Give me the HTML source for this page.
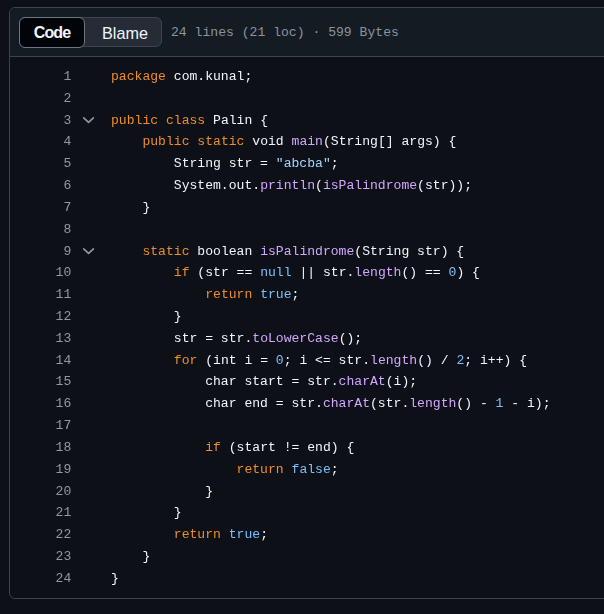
<!DOCTYPE html>
<html><head><meta charset="utf-8">
<style>
html,body{margin:0;padding:0;background:#0d1117;width:604px;height:614px;overflow:hidden;}
body{position:relative;font-family:"Liberation Sans",sans-serif;}
.box{position:absolute;left:9px;top:7px;width:640px;height:590px;border:1px solid #3d444d;border-radius:6px;background:#0d1117;}
.hdr{position:absolute;left:10px;top:8px;width:640px;height:48px;background:#151b23;border-bottom:1px solid #3d444d;border-radius:6px 0 0 0;}
.seg{position:absolute;left:19px;top:17px;width:141px;height:28px;border:1px solid #3d444d;border-radius:6px;background:#262c36;}
.btn-code{position:absolute;left:19px;top:17px;width:64px;height:29px;border:1px solid #6e7681;border-radius:6px;background:#010409;color:#f0f6fc;font-weight:bold;font-size:16px;letter-spacing:-0.9px;line-height:29px;text-align:center;}
.btn-blame{position:absolute;left:86.5px;top:17px;width:77px;height:32px;color:#f0f6fc;font-size:16.2px;line-height:32.5px;text-align:center;}
.meta{position:absolute;left:171px;top:23px;font-family:"Liberation Mono",monospace;font-size:13.1px;line-height:20px;color:#8b949e;white-space:pre;}
.ln,.cl{position:absolute;will-change:transform;height:21.818px;line-height:21.818px;font-family:"Liberation Mono",monospace;font-size:13.09px;white-space:pre;}
.ln{left:20px;width:51.3px;text-align:right;color:#9198a1;}
.cl{left:111px;color:#f0f6fc;}
.chev{position:absolute;left:82px;}
.k{color:#ec8e2c}.f{color:#d2a8ff}.s{color:#a5d6ff}.c{color:#79c0ff}
</style></head><body>
<div class="box"></div>
<div class="hdr"></div>
<div class="seg"></div>
<div class="btn-code">Code</div>
<div class="btn-blame">Blame</div>
<div class="meta">24 lines (21 loc) · 599 Bytes</div>
<div class="ln" style="top:66.000px">1</div><div class="cl" style="top:66.000px"><span class="k">package</span> com.kunal;</div>
<div class="ln" style="top:87.818px">2</div><div class="cl" style="top:87.818px"></div>
<div class="ln" style="top:109.636px">3</div><svg class="chev" style="top:114.64px" width="14" height="14" viewBox="0 0 14 14"><path d="M1.7 2.9 L6.55 7.4 L11.4 2.9" fill="none" stroke="#9198a1" stroke-width="1.6" stroke-linecap="round" stroke-linejoin="round"/></svg><div class="cl" style="top:109.636px"><span class="k">public</span> <span class="k">class</span> Palin {</div>
<div class="ln" style="top:131.454px">4</div><div class="cl" style="top:131.454px">    <span class="k">public</span> <span class="k">static</span> void <span class="f">main</span>(String[] args) {</div>
<div class="ln" style="top:153.272px">5</div><div class="cl" style="top:153.272px">        String str = <span class="s">"abcba"</span>;</div>
<div class="ln" style="top:175.090px">6</div><div class="cl" style="top:175.090px">        System.out.<span class="f">println</span>(<span class="f">isPalindrome</span>(str));</div>
<div class="ln" style="top:196.908px">7</div><div class="cl" style="top:196.908px">    }</div>
<div class="ln" style="top:218.726px">8</div><div class="cl" style="top:218.726px"></div>
<div class="ln" style="top:240.544px">9</div><svg class="chev" style="top:245.54px" width="14" height="14" viewBox="0 0 14 14"><path d="M1.7 2.9 L6.55 7.4 L11.4 2.9" fill="none" stroke="#9198a1" stroke-width="1.6" stroke-linecap="round" stroke-linejoin="round"/></svg><div class="cl" style="top:240.544px">    <span class="k">static</span> boolean <span class="f">isPalindrome</span>(String str) {</div>
<div class="ln" style="top:262.362px">10</div><div class="cl" style="top:262.362px">        <span class="k">if</span> (str == <span class="c">null</span> || str.<span class="f">length</span>() == <span class="c">0</span>) {</div>
<div class="ln" style="top:284.180px">11</div><div class="cl" style="top:284.180px">            <span class="k">return</span> <span class="c">true</span>;</div>
<div class="ln" style="top:305.998px">12</div><div class="cl" style="top:305.998px">        }</div>
<div class="ln" style="top:327.816px">13</div><div class="cl" style="top:327.816px">        str = str.<span class="f">toLowerCase</span>();</div>
<div class="ln" style="top:349.634px">14</div><div class="cl" style="top:349.634px">        <span class="k">for</span> (int i = <span class="c">0</span>; i &lt;= str.<span class="f">length</span>() / <span class="c">2</span>; i++) {</div>
<div class="ln" style="top:371.452px">15</div><div class="cl" style="top:371.452px">            char start = str.<span class="f">charAt</span>(i);</div>
<div class="ln" style="top:393.270px">16</div><div class="cl" style="top:393.270px">            char end = str.<span class="f">charAt</span>(str.<span class="f">length</span>() - <span class="c">1</span> - i);</div>
<div class="ln" style="top:415.088px">17</div><div class="cl" style="top:415.088px"></div>
<div class="ln" style="top:436.906px">18</div><div class="cl" style="top:436.906px">            <span class="k">if</span> (start != end) {</div>
<div class="ln" style="top:458.724px">19</div><div class="cl" style="top:458.724px">                <span class="k">return</span> <span class="c">false</span>;</div>
<div class="ln" style="top:480.542px">20</div><div class="cl" style="top:480.542px">            }</div>
<div class="ln" style="top:502.360px">21</div><div class="cl" style="top:502.360px">        }</div>
<div class="ln" style="top:524.178px">22</div><div class="cl" style="top:524.178px">        <span class="k">return</span> <span class="c">true</span>;</div>
<div class="ln" style="top:545.996px">23</div><div class="cl" style="top:545.996px">    }</div>
<div class="ln" style="top:567.814px">24</div><div class="cl" style="top:567.814px">}</div>
</body></html>
